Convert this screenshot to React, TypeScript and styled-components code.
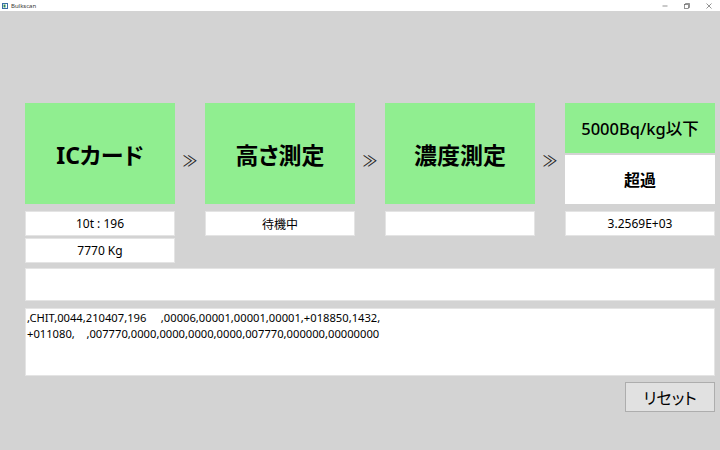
import React, {FC} from 'react';
import styled, {createGlobalStyle} from 'styled-components';

const GlobalStyle = createGlobalStyle`
  html, body {
    margin: 0;
    padding: 0;
    width: 720px;
    height: 450px;
    overflow: hidden;
    background: #d3d3d3;
  }
  * {
    box-sizing: border-box;
  }
`

const FONT = `"Noto Sans", "Noto Sans CJK JP", sans-serif`

const Window = styled.div`
  width: 720px;
  height: 450px;
  display: flex;
  flex-direction: column;
  font-family: ${FONT};
  color: #000;
`

const TitleBar = styled.div`
  height: 11px;
  background: #fff;
  display: flex;
  align-items: center;
  padding-left: 2px;
  font-size: 6px;
  color: #333;
`

const TitleText = styled.span`
  margin-left: 3px;
  flex: 1;
  line-height: 1;
`

const WindowButton = styled.div`
  width: 22px;
  height: 11px;
  display: flex;
  align-items: center;
  justify-content: center;
`

const Main = styled.main`
  flex: 1;
  background: #d3d3d3;
  padding: 92px 5px 0 25px;
  display: flex;
  flex-direction: column;
`

const StageRow = styled.div`
  display: flex;
  align-items: flex-start;
`

const StageColumn = styled.div`
  width: 150px;
  display: flex;
  flex-direction: column;
`

const StageCard = styled.div`
  height: 101px;
  background: #90ee90;
  display: flex;
  align-items: center;
  justify-content: center;
  font-size: 23px;
  font-weight: 700;
  font-feature-settings: "palt";
  margin-bottom: 7px;
`

const SplitCard = styled.div`
  height: 101px;
  display: flex;
  flex-direction: column;
  gap: 2px;
  margin-bottom: 7px;
`

const SplitPart = styled.div<{ $green?: boolean; $bold?: boolean }>`
  flex: 1;
  background: ${p => (p.$green ? '#90ee90' : '#fff')};
  display: flex;
  align-items: center;
  justify-content: center;
  font-size: ${p => (p.$bold ? '16px' : '16.5px')};
  font-weight: ${p => (p.$bold ? 700 : 500)};
  font-feature-settings: "palt";
`

const InfoBox = styled.div`
  height: 25px;
  background: #fff;
  border: 1px solid #e4e4e4;
  display: flex;
  align-items: center;
  justify-content: center;
  font-size: 12px;
  margin-bottom: 2px;
`

const Arrow = styled.div`
  width: 30px;
  height: 101px;
  display: flex;
  align-items: center;
  justify-content: center;
  padding-top: 12px;
  font-size: 15px;
  color: #222;
`

const StatusBar = styled.div`
  height: 33px;
  margin-top: 3px;
  background: #fff;
  border: 1px solid #e4e4e4;
`

const LogBox = styled.div`
  height: 68px;
  margin-top: 7px;
  background: #fff;
  border: 1px solid #e4e4e4;
  padding: 1px 0 0 1px;
  font-size: 11.2px;
  line-height: 16px;
  white-space: pre;
`

const Footer = styled.div`
  display: flex;
  justify-content: flex-end;
  margin-top: 6px;
`

const ResetButton = styled.button`
  width: 90px;
  height: 30px;
  background: #e1e1e1;
  border: 1px solid #adadad;
  font-family: ${FONT};
  font-size: 16px;
  font-feature-settings: "palt";
  color: #000;
  padding: 0;
`

type Stage = {
    title: string
    info: string[]
}

const stages: Stage[] = [
    {title: 'ICカード', info: ['10t : 196', '7770 Kg']},
    {title: '高さ測定', info: ['待機中']},
    {title: '濃度測定', info: ['']},
]

const AppIcon: FC = () => (
    <svg width="6" height="6" viewBox="0 0 6 6">
        <rect x="0.5" y="0.5" width="5" height="5" fill="#fff" stroke="#3a6ea5"/>
        <rect x="1.5" y="1.5" width="2" height="3" fill="#2e8b57"/>
    </svg>
)

const App: FC = () => {
    return (
        <Window>
            <GlobalStyle/>
            <TitleBar>
                <AppIcon/>
                <TitleText>Bulkscan</TitleText>
                <WindowButton>
                    <svg width="6" height="6" viewBox="0 0 6 6">
                        <line x1="0.5" y1="3" x2="5.5" y2="3" stroke="#666" strokeWidth="0.7"/>
                    </svg>
                </WindowButton>
                <WindowButton>
                    <svg width="6" height="6" viewBox="0 0 6 6">
                        <rect x="0.5" y="1.5" width="4" height="4" fill="none" stroke="#666" strokeWidth="0.7"/>
                        <path d="M1.5 1.5 V0.5 H5.5 V4.5 H4.5" fill="none" stroke="#666" strokeWidth="0.7"/>
                    </svg>
                </WindowButton>
                <WindowButton>
                    <svg width="6" height="6" viewBox="0 0 6 6">
                        <path d="M0.5 0.5 L5.5 5.5 M5.5 0.5 L0.5 5.5" stroke="#666" strokeWidth="0.7"/>
                    </svg>
                </WindowButton>
            </TitleBar>
            <Main>
                <StageRow>
                    {stages.map(stage => (
                        <React.Fragment key={stage.title}>
                            <StageColumn>
                                <StageCard>{stage.title}</StageCard>
                                {stage.info.map((line, i) => (
                                    <InfoBox key={i}>{line}</InfoBox>
                                ))}
                            </StageColumn>
                            <Arrow>≫</Arrow>
                        </React.Fragment>
                    ))}
                    <StageColumn>
                        <SplitCard>
                            <SplitPart $green>5000Bq/kg以下</SplitPart>
                            <SplitPart $bold>超過</SplitPart>
                        </SplitCard>
                        <InfoBox>3.2569E+03</InfoBox>
                    </StageColumn>
                </StageRow>
                <StatusBar/>
                <LogBox>
                    {',CHIT,0044,210407,196     ,00006,00001,00001,00001,+018850,1432,\n+011080,    ,007770,0000,0000,0000,0000,007770,000000,00000000'}
                </LogBox>
                <Footer>
                    <ResetButton>リセット</ResetButton>
                </Footer>
            </Main>
        </Window>
    );
};

export default App;
